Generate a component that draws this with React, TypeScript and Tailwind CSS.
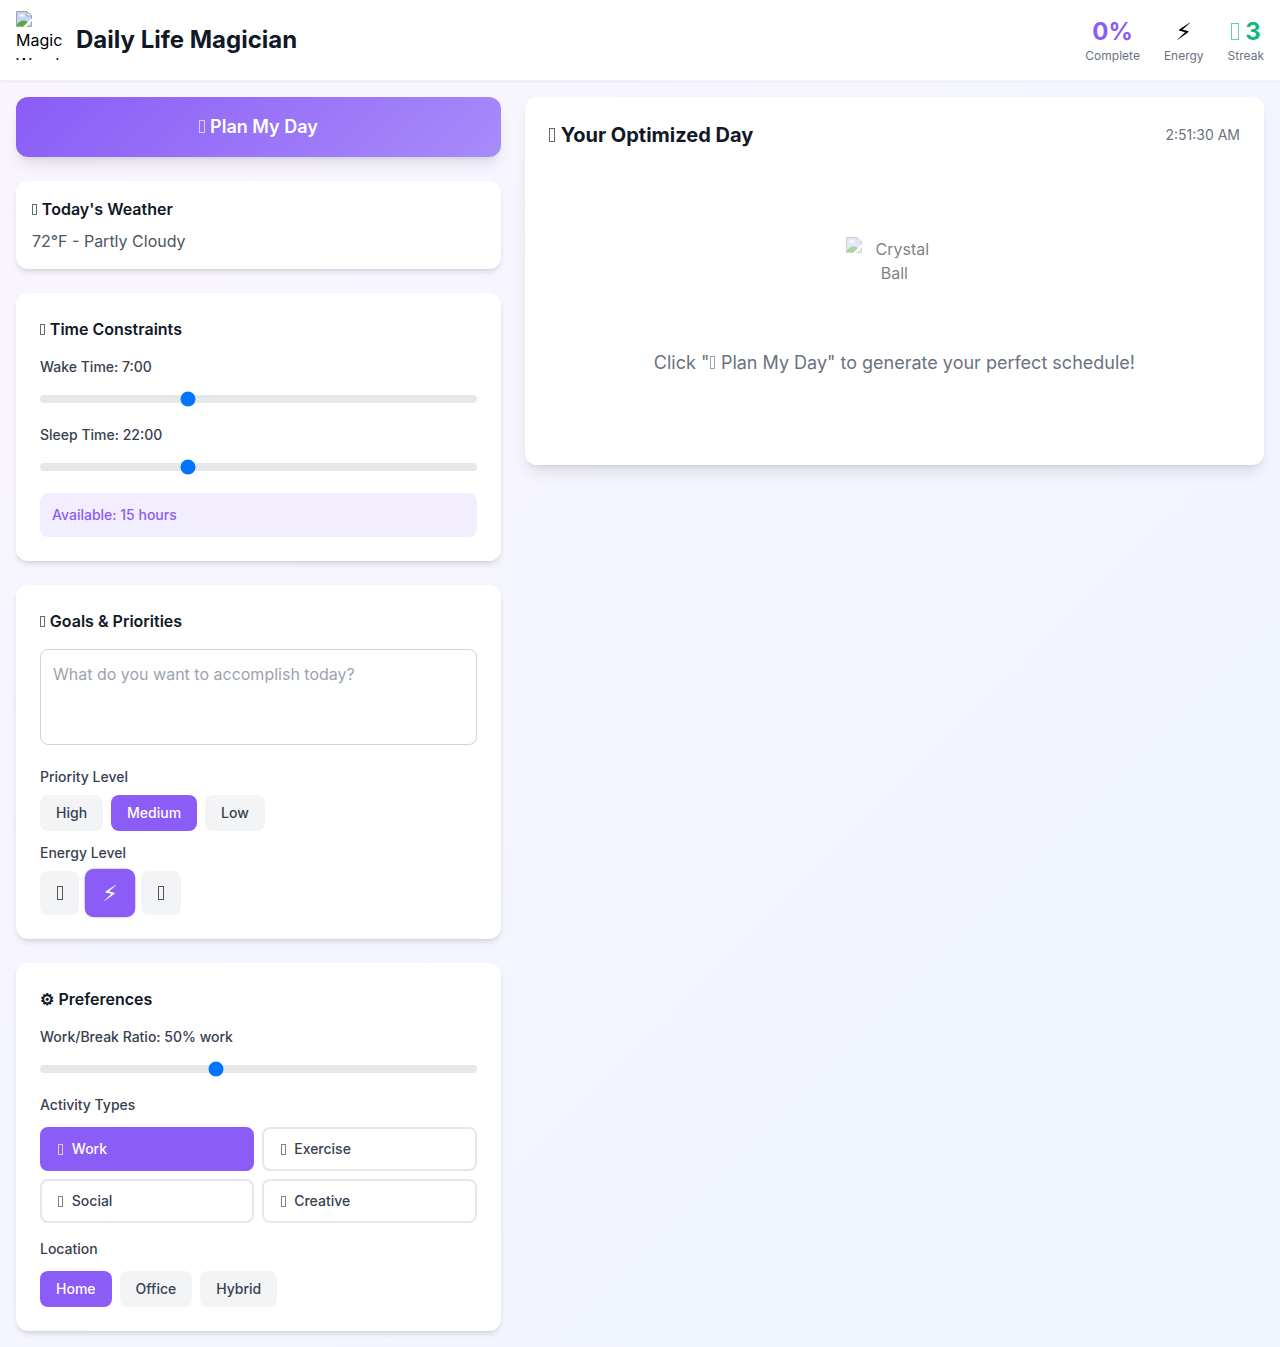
import { useState } from "react";
import type { ReactNode } from "react";
import clsx from "clsx";

type Priority = "High" | "Medium" | "Low";
type Location = "Home" | "Office" | "Hybrid";

// text presentation, so it follows the text color
const BOLT = "⚡\uFE0E";

const priorities: Priority[] = ["High", "Medium", "Low"];
const locations: Location[] = ["Home", "Office", "Hybrid"];

// hollow box that scales with the text around it
function Glyph() {
  return <span className="inline-block w-[0.31em] h-[0.7em] ml-[0.025em] mr-[0.03em] border border-current opacity-65" />;
}

const energyLevels = [
  { id: "low", icon: <Glyph /> },
  { id: "medium", icon: BOLT },
  { id: "high", icon: <Glyph /> },
];

const activityTypes = [
  { id: "work", label: "Work" },
  { id: "exercise", label: "Exercise" },
  { id: "social", label: "Social" },
  { id: "creative", label: "Creative" },
];

function ImageIcon({ className }: { className?: string }) {
  return (
    <svg width="16" height="16" viewBox="0 0 16 16" className={className}>
      <path d="M0.5 0.5H11L15.5 5V15.5H0.5Z" fill="#c3d5f9" stroke="#a3a3a3" />
      <path d="M3 5.5C3 4.4 4 4.2 4.4 4.3C4.8 2.8 7 2.8 7.3 4.3C8.3 4.2 8.6 5 8.5 5.5Z" fill="#fff" />
      <path d="M1 15V13.5C3 10.8 5 9.5 7.5 9.5C9.5 9.5 11 10.3 12 11.5L8.5 15Z" fill="#55ad3b" />
      <path d="M16 7.5V10L10.2 16H7L13.5 9.5Z" fill="#fff" />
      <path d="M11 0.5V5H15.5Z" fill="#fff" stroke="#a3a3a3" />
    </svg>
  );
}

function Card({ icon, title, children }: { icon: ReactNode; title: string; children: ReactNode }) {
  return (
    <div className="bg-white rounded-xl shadow-md p-6">
      <h3 className="font-semibold text-[#111827] mb-4">
        {icon} {title}
      </h3>
      {children}
    </div>
  );
}

interface SliderProps {
  label: string;
  min: number;
  max: number;
  value: number;
  onChange: (value: number) => void;
}

function Slider({ label, min, max, value, onChange }: SliderProps) {
  return (
    <div>
      <label className="block text-sm font-medium text-[#374151] mb-2">{label}</label>
      <input
        type="range"
        min={min}
        max={max}
        value={value}
        onChange={e => onChange(Number(e.target.value))}
        className="w-full h-2 bg-[#e5e7eb] rounded-lg appearance-none cursor-pointer"
      />
    </div>
  );
}

function Pill({ active, onClick, children }: { active: boolean; onClick: () => void; children: ReactNode }) {
  return (
    <button
      onClick={onClick}
      className={clsx(
        "px-4 py-2 rounded-lg text-sm font-medium",
        active ? "bg-[#8b5cf6] text-white" : "bg-[#f3f4f6] text-[#374151]"
      )}
    >
      {children}
    </button>
  );
}

function Stat({ value, label, className }: { value: ReactNode; label: string; className?: string }) {
  return (
    <div className="text-center">
      <div className={clsx("text-2xl font-bold", className)}>{value}</div>
      <div className="text-xs text-[#6b7280]">{label}</div>
    </div>
  );
}

export default function App() {
  const [wakeTime, setWakeTime] = useState(7);
  const [sleepTime, setSleepTime] = useState(22);
  const [goals, setGoals] = useState("");
  const [priority, setPriority] = useState<Priority>("Medium");
  const [energy, setEnergy] = useState("medium");
  const [workRatio, setWorkRatio] = useState(50);
  const [activities, setActivities] = useState<string[]>(["work"]);
  const [location, setLocation] = useState<Location>("Home");

  const toggleActivity = (id: string) => {
    setActivities(prev => (prev.includes(id) ? prev.filter(a => a !== id) : [...prev, id]));
  };

  return (
    <div className="min-h-screen bg-[linear-gradient(135deg,#faf5ff_0%,#eff6ff_100%)] font-['Inter','DejaVu_Sans',sans-serif] text-black">
      <header className="bg-white shadow-xs border-b border-[#f3f4f6]">
        <div className="px-4 py-2 flex items-center justify-between">
          <div className="flex items-center gap-3">
            <div className="w-12 h-[49px] -mb-px overflow-hidden -translate-y-[5px]">
              <ImageIcon className="mb-px" />
              <div className="leading-6">Magic Wand</div>
            </div>
            <h1 className="text-2xl font-bold text-[#111827]">Daily Life Magician</h1>
          </div>
          <div className="flex items-center gap-6 py-2">
            <Stat value="0%" label="Complete" className="text-[#8b5cf6]" />
            <Stat value={BOLT} label="Energy" />
            <Stat value={<><Glyph /> 3</>} label="Streak" className="text-[#10b981]" />
          </div>
        </div>
      </header>

      <main className="p-4 grid grid-cols-5 gap-6 items-start">
        <div className="col-span-2 space-y-6">
          <button className="block w-full py-4 rounded-xl shadow-lg bg-[linear-gradient(135deg,#8b5cf6_0%,#a78bfa_100%)] text-white text-lg font-semibold">
            <Glyph /> Plan My Day
          </button>

          <div className="bg-white rounded-xl shadow-md p-4">
            <h3 className="font-semibold text-[#111827] mb-2">
              <Glyph /> Today's Weather
            </h3>
            <p className="text-[#4b5563]">72°F - Partly Cloudy</p>
          </div>

          <Card icon={<Glyph />} title="Time Constraints">
            <div className="space-y-4">
              <Slider label={`Wake Time: ${wakeTime}:00`} min={5} max={11} value={wakeTime} onChange={setWakeTime} />
              <Slider label={`Sleep Time: ${sleepTime}:00`} min={20} max={26} value={sleepTime} onChange={setSleepTime} />
              <div className="p-3 rounded-lg bg-[#8b5cf6]/10 text-sm font-medium text-[#8b5cf6]">
                Available: {sleepTime - wakeTime} hours
              </div>
            </div>
          </Card>

          <Card icon={<Glyph />} title="Goals & Priorities">
            <textarea
              className="block w-full h-24 p-3 border border-[#d1d5db] rounded-lg resize-none placeholder:text-[#9ca3af] mb-[22px]"
              placeholder="What do you want to accomplish today?"
              value={goals}
              onChange={e => setGoals(e.target.value)}
            />
            <label className="block text-sm font-medium text-[#374151] mb-2">Priority Level</label>
            <div className="flex gap-2 mb-3">
              {priorities.map(p => (
                <Pill key={p} active={priority === p} onClick={() => setPriority(p)}>
                  {p}
                </Pill>
              ))}
            </div>
            <label className="block text-sm font-medium text-[#374151] mb-2">Energy Level</label>
            <div className="flex gap-2">
              {energyLevels.map(level => (
                <button
                  key={level.id}
                  onClick={() => setEnergy(level.id)}
                  className={clsx(
                    "px-4 py-2 rounded-lg text-xl",
                    energy === level.id ? "bg-[#8b5cf6] text-white scale-110" : "bg-[#f3f4f6]"
                  )}
                >
                  {level.icon}
                </button>
              ))}
            </div>
          </Card>

          <Card icon={<span className="font-['Inter',sans-serif] mr-[0.4px]">⚙</span>} title="Preferences">
            <div className="space-y-4">
              <Slider
                label={`Work/Break Ratio: ${workRatio}% work`}
                min={30}
                max={80}
                value={workRatio}
                onChange={setWorkRatio}
              />
              <div>
                <label className="block text-sm font-medium text-[#374151] mb-3">Activity Types</label>
                <div className="grid grid-cols-2 gap-2">
                  {activityTypes.map(activity => (
                    <button
                      key={activity.id}
                      onClick={() => toggleActivity(activity.id)}
                      className={clsx(
                        "flex items-center gap-2 px-4 py-2 rounded-lg border-2",
                        activities.includes(activity.id)
                          ? "bg-[#8b5cf6] border-[#8b5cf6] text-white"
                          : "bg-white border-[#e5e7eb] text-[#374151]"
                      )}
                    >
                      <span>
                        <Glyph />
                      </span>
                      <span className="text-sm font-medium">{activity.label}</span>
                    </button>
                  ))}
                </div>
              </div>
              <div>
                <label className="block text-sm font-medium text-[#374151] mb-3">Location</label>
                <div className="flex gap-2">
                  {locations.map(l => (
                    <Pill key={l} active={location === l} onClick={() => setLocation(l)}>
                      {l}
                    </Pill>
                  ))}
                </div>
              </div>
            </div>
          </Card>
        </div>

        <div className="col-span-3 bg-white rounded-xl shadow-lg p-6">
          <div className="flex items-center justify-between mb-6">
            <h2 className="text-xl font-bold text-[#111827]">
              <Glyph /> Your Optimized Day
            </h2>
            <div className="text-sm text-[#6b7280]">2:51:30 AM</div>
          </div>
          <div className="text-center py-16">
            <div className="w-24 h-24 mx-auto mb-4 opacity-50 overflow-hidden">
              <ImageIcon className="float-left" />
              Crystal Ball
            </div>
            <p className="text-lg text-[#6b7280]">
              Click "<Glyph /> Plan My Day" to generate your perfect schedule!
            </p>
          </div>
        </div>
      </main>
    </div>
  );
}
